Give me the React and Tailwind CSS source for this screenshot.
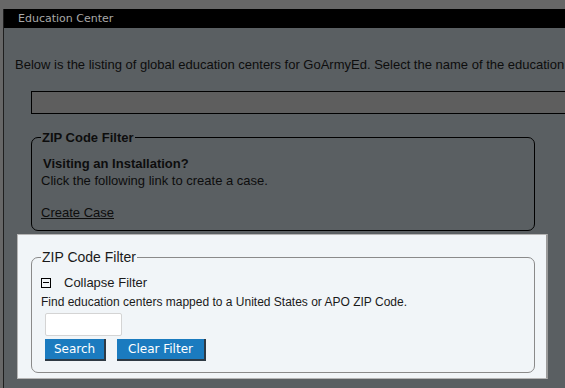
export default function App() {
  return (
    <div className="w-[565px] h-[388px] overflow-hidden bg-[#676767] pt-[9px] pl-[3px] font-['Liberation_Sans',Arial,sans-serif]">
      <div className="h-[379px] w-[600px] border-l border-[#1e1e1e] bg-[#5a5f62]">
        <div className="h-[19px] bg-black pl-[14px] text-[11px] leading-[19px] text-[#a8a8a8] font-['DejaVu_Sans',sans-serif]">
          Education Center
        </div>
        <div className="pl-[11px]">
          <div className="mt-[29px] whitespace-nowrap text-[13px] leading-[15px] text-[#0d0d0d]">
            Below is the listing of global education centers for GoArmyEd. Select the name of the education
          </div>
          <div className="ml-[16px] mt-[19px] h-[23px] w-[560px] border border-black bg-[#5e5e5e]"></div>

          <fieldset className="ml-[16px] mt-[16px] w-[504px] rounded-[7px] border border-black pl-[9px] pb-[9px] text-[#0d0d0d]">
            <legend className="px-[1px] text-[13px] font-bold leading-[15px]">ZIP Code Filter</legend>
            <div className="mt-[11px] ml-[2px] text-[13px] font-bold leading-[16px]">Visiting an Installation?</div>
            <div className="text-[13px] leading-[17px]">Click the following link to create a case.</div>
            <div className="mt-[16px] text-[13px] leading-[16px] underline">Create Case</div>
          </fieldset>

          <div className="ml-[2px] mt-[3px] w-[531px] border border-[#b5b5b5] border-r-2 border-r-[#9a9a9a] bg-[#f1f5f8] pl-[13px] pt-[14px] pb-[5px]">
            <fieldset className="w-[504px] rounded-[7px] border border-[#8a8a8a] pl-[9px] pb-[11px] text-[#1a1a1a]">
              <legend className="px-[1px] text-[14px] leading-[16px]">ZIP Code Filter</legend>
              <div className="mt-[10px] flex items-center text-[13px] leading-[15px]">
                <span className="relative h-[10px] w-[10px] border border-black">
                  <span className="absolute left-[1px] top-[3px] h-[1px] w-[6px] bg-black"></span>
                </span>
                <span className="ml-[13px]">Collapse Filter</span>
              </div>
              <div className="mt-[5px] text-[12px] leading-[14px]">Find education centers mapped to a United States or APO ZIP Code.</div>
              <div className="ml-[4px] mt-[4px] h-[23px] w-[77px] rounded-[2px] border border-[#d4d4d4] bg-white"></div>
              <div className="ml-[4px] mt-[3px] flex gap-[11px] font-['DejaVu_Sans',sans-serif] text-[12px] text-white">
                <div className="flex h-[22px] w-[61px] items-center justify-center border-b-2 border-r-2 border-[#2f3a44] bg-[#1b7bbf]">Search</div>
                <div className="flex h-[22px] w-[89px] items-center justify-center border-b-2 border-r-2 border-[#2f3a44] bg-[#1b7bbf]">Clear Filter</div>
              </div>
            </fieldset>
          </div>
        </div>
      </div>
    </div>
  );
}
